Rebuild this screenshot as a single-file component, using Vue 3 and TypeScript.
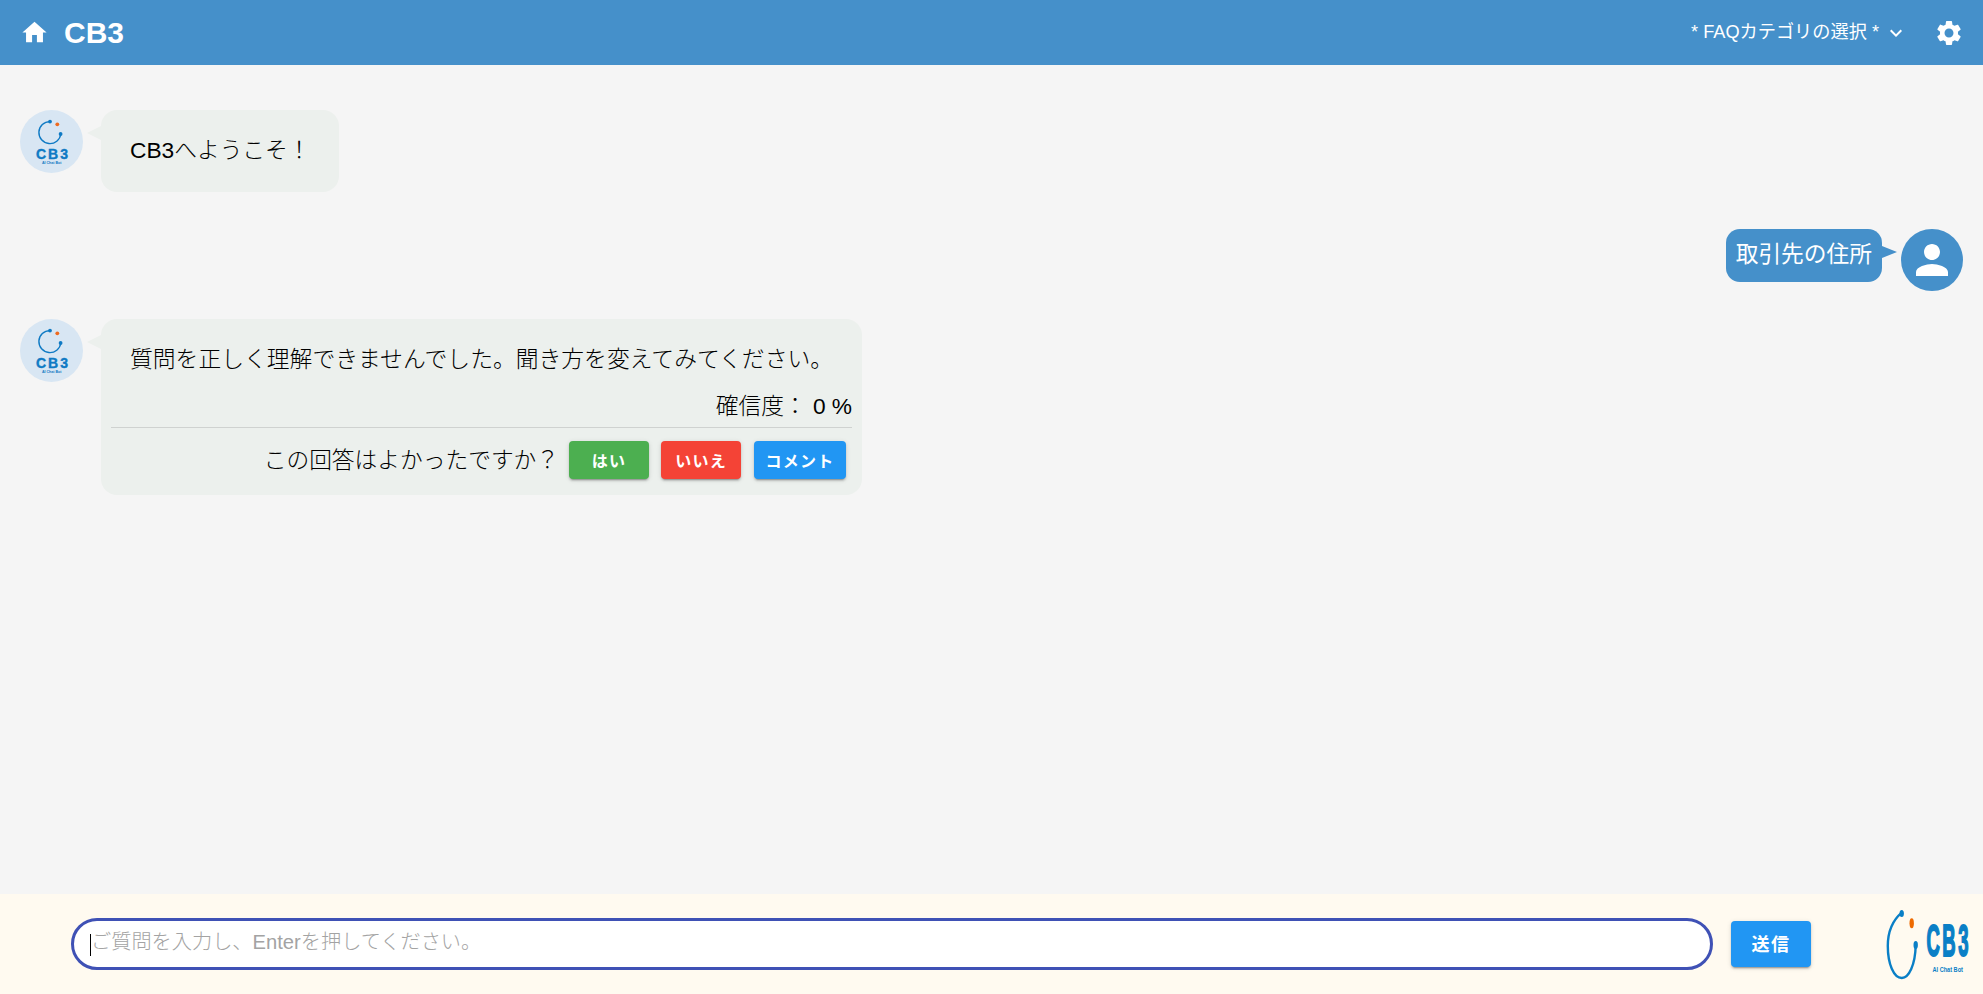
<script setup lang="ts">
const placeholder: string = 'ご質問を入力し、Enterを押してください。'
</script>

<template>
  <div class="page">
    <header class="topbar">
      <svg class="home" viewBox="0 0 24 24"><path d="M10 20v-6h4v6h5v-8h3L12 3 2 12h3v8z" /></svg>
      <h1 class="title">CB3</h1>
      <div class="category">
        <span class="category-label">* FAQカテゴリの選択 *</span>
        <svg class="chevron" viewBox="0 0 24 24"><path d="M16.59 8.59L12 13.17 7.41 8.59 6 10l6 6 6-6z" /></svg>
      </div>
      <svg class="gear" viewBox="0 0 24 24"><path d="M19.14 12.94c.04-.3.06-.61.06-.94 0-.32-.02-.64-.07-.94l2.03-1.58c.18-.14.23-.41.12-.61l-1.92-3.32c-.12-.22-.37-.29-.59-.22l-2.39.96c-.5-.38-1.03-.7-1.62-.94l-.36-2.54c-.04-.24-.24-.41-.48-.41h-3.84c-.24 0-.43.17-.47.41l-.36 2.54c-.59.24-1.13.57-1.62.94l-2.39-.96c-.22-.08-.47 0-.59.22L2.74 8.87c-.12.21-.08.47.12.61l2.03 1.58c-.05.3-.09.63-.09.94s.02.64.07.94l-2.03 1.58c-.18.14-.23.41-.12.61l1.92 3.32c.12.22.37.29.59.22l2.39-.96c.5.38 1.03.7 1.62.94l.36 2.54c.05.24.24.41.48.41h3.84c.24 0 .44-.17.47-.41l.36-2.54c.59-.24 1.13-.56 1.62-.94l2.39.96c.22.08.47 0 .59-.22l1.92-3.32c.12-.22.07-.47-.12-.61l-2.01-1.58zM12 15.6c-1.98 0-3.6-1.62-3.6-3.6s1.62-3.6 3.6-3.6 3.6 1.62 3.6 3.6-1.62 3.6-3.6 3.6z" /></svg>
    </header>

    <main class="chat">
      <div class="row first">
        <svg class="avatar" viewBox="0 0 63 63">
          <circle cx="31.5" cy="31.5" r="31.5" fill="#d8e6f3" />
          <path d="M30 11.6A11 11 0 1 0 40.8 24" fill="none" stroke="#0f7ac4" stroke-width="1.4" />
          <circle cx="30" cy="11.6" r="1.9" fill="#0f7ac4" />
          <circle cx="40.6" cy="24" r="1.9" fill="#0f7ac4" />
          <circle cx="37.3" cy="14.3" r="1.9" fill="#ee6a1f" />
          <text x="16" y="49.3" class="av-name">CB3</text>
          <text x="31.7" y="53.8" text-anchor="middle" class="av-sub">AI Chat Bot</text>
        </svg>
        <div class="bubble bot">
          <p class="msg short">CB3へようこそ！</p>
        </div>
      </div>

      <div class="row mine">
        <div class="bubble user">取引先の住所</div>
        <div class="user-avatar">
          <svg viewBox="0 0 24 24"><path d="M12 12c2.21 0 4-1.79 4-4s-1.79-4-4-4-4 1.79-4 4 1.79 4 4 4zm0 2c-2.67 0-8 1.34-8 4v2h16v-2c0-2.66-5.33-4-8-4z" /></svg>
        </div>
      </div>

      <div class="row">
        <svg class="avatar" viewBox="0 0 63 63">
          <circle cx="31.5" cy="31.5" r="31.5" fill="#d8e6f3" />
          <path d="M30 11.6A11 11 0 1 0 40.8 24" fill="none" stroke="#0f7ac4" stroke-width="1.4" />
          <circle cx="30" cy="11.6" r="1.9" fill="#0f7ac4" />
          <circle cx="40.6" cy="24" r="1.9" fill="#0f7ac4" />
          <circle cx="37.3" cy="14.3" r="1.9" fill="#ee6a1f" />
          <text x="16" y="49.3" class="av-name">CB3</text>
          <text x="31.7" y="53.8" text-anchor="middle" class="av-sub">AI Chat Bot</text>
        </svg>
        <div class="bubble bot">
          <p class="msg long">質問を正しく理解できませんでした。聞き方を変えてみてください。</p>
          <p class="confidence">確信度： 0 %</p>
          <div class="feedback">
            <span class="ask">この回答はよかったですか？</span>
            <button class="btn green">はい</button>
            <button class="btn red">いいえ</button>
            <button class="btn blue wide">コメント</button>
          </div>
        </div>
      </div>
    </main>

    <footer class="composer">
      <div class="field">
        <input class="input" type="text" :placeholder="placeholder" />
        <span class="caret"></span>
      </div>
      <button class="btn blue send"><span class="send-label">送信</span></button>
      <svg class="logo" viewBox="0 0 83 70">
        <path d="M14.7 3.7C5 12 .8 24 .8 37c0 18 6 32 14 32 7 0 13.500-13 13.900-33" fill="none" stroke="#0a7fc6" stroke-width="2.4" />
        <ellipse cx="14.700" cy="4.500" rx="2.200" ry="3.600" fill="#0a7fc6" />
        <ellipse cx="28.700" cy="36" rx="2.200" ry="4" fill="#0a7fc6" />
        <ellipse cx="24.700" cy="14.300" rx="2.200" ry="5" fill="#ee6a00" />
        <text transform="translate(39.500 47) scale(.42 1)" class="logo-name">CB3</text>
        <text transform="translate(45.500 63) scale(.8 1)" class="logo-sub">AI Chat Bot</text>
      </svg>
    </footer>
  </div>
</template>

<style scoped>
.page {
  display: flex;
  flex-direction: column;
  height: 994px;
  background: #f5f5f5;
  color: #000;
  font-family: "Liberation Sans", "Noto Sans CJK JP", sans-serif;
  font-weight: 300;
  overflow: hidden;
}

.topbar {
  flex: none;
  display: flex;
  align-items: center;
  height: 65px;
  padding: 0 19px 0 20px;
  background: #4590ca;
  color: #fff;
}
.topbar svg { fill: #fff; display: block; }
.home { width: 29px; height: 29px; margin-top: -1px; }
.title {
  flex: 1;
  margin: 0 0 0 15px;
  font-size: 30px;
  font-weight: 700;
}
.category {
  display: flex;
  align-items: center;
  font-size: 18.2px;
  font-weight: 400;
}
.category-label { margin-top: -5px; }
.chevron { width: 24px; height: 24px; margin-left: 5px; }
.gear { width: 30px; height: 30px; margin-left: 26px; }

.chat {
  flex: 1;
  min-height: 0;
  padding: 45px 20px 0;
}
.row {
  display: flex;
  align-items: flex-start;
  margin-bottom: 28px;
}
.row.first { margin-bottom: 37px; }
.row.mine { justify-content: flex-end; }

.avatar { flex: none; width: 63px; height: 63px; display: block; }
.av-name {
  font: 700 14px "Liberation Sans", sans-serif;
  letter-spacing: 2px;
  fill: #0f7ac4;
  stroke: #0f7ac4;
  stroke-width: .4px;
}
.av-sub { font: 700 3.600px "Liberation Sans", sans-serif; fill: #0f7ac4; }

.bubble {
  position: relative;
  font-size: 22.72px;
}
.bubble.bot {
  margin-left: 18px;
  padding: 10px;
  background: #ecf0ed;
  border-radius: 16px;
}
.bubble.bot::before {
  content: "";
  position: absolute;
  left: -14px;
  top: 16px;
  border-style: solid;
  border-width: 7px 14px 7px 0;
  border-color: transparent #ecf0ed transparent transparent;
}
.bubble.user {
  padding: 0 10px 2px;
  line-height: 51px;
  color: #fff;
  font-weight: 400;
  background: #4590ca;
  border-radius: 14px;
}
.bubble.user::after {
  content: "";
  position: absolute;
  right: -15px;
  top: 17px;
  border-style: solid;
  border-width: 6px 0 6px 15px;
  border-color: transparent transparent transparent #4590ca;
}
.user-avatar {
  flex: none;
  display: flex;
  align-items: center;
  justify-content: center;
  width: 62px;
  height: 62px;
  margin-left: 19px;
  border-radius: 50%;
  background: #4590ca;
}
.user-avatar svg { width: 48px; height: 48px; fill: #fff; display: block; }

.msg {
  margin: 0;
  padding: 0 19px 2px;
  line-height: 60px;
}
.msg.short { padding-right: 18px; }
.msg.long { font-size: 22.8px; }
.confidence {
  margin: 0;
  padding-bottom: 6px;
  line-height: 30px;
  text-align: right;
}
.feedback {
  display: flex;
  align-items: center;
  justify-content: flex-end;
  padding: 13px 0 6px;
  border-top: 1px solid #cfd2d0;
}
.ask { margin-right: 4px; padding-bottom: 4px; }

.btn {
  width: 80px;
  height: 38px;
  margin: 0 6px;
  padding: 0;
  border: 0;
  border-radius: 4px;
  color: #fff;
  font-family: Roboto, "Noto Sans CJK JP", sans-serif;
  font-size: 16px;
  font-weight: 700;
  letter-spacing: 0.08em;
  box-shadow: 0 3px 1px -2px rgba(0,0,0,.2), 0 2px 2px 0 rgba(0,0,0,.14), 0 1px 5px 0 rgba(0,0,0,.12);
}
.btn.wide { width: 92px; margin-left: 7px; }
.green { background: #4caf50; }
.red { background: #f44336; }
.blue { background: #2196f3; }

.composer {
  flex: none;
  display: flex;
  align-items: center;
  height: 100px;
  padding: 0 13px 0 71px;
  background: #fffaf0;
}
.field {
  position: relative;
  flex: none;
  width: 1642px;
  height: 52px;
}
.input {
  box-sizing: border-box;
  display: block;
  width: 100%;
  height: 100%;
  padding: 0 17px 3px;
  border: 3px solid #3f51b5;
  border-radius: 26px;
  outline: none;
  background: #fff;
  font-family: "Liberation Sans", "Noto Sans CJK JP", sans-serif;
  font-size: 20.2px;
  font-weight: 300;
  color: #000;
}
.input::placeholder { color: #a3a3a3; opacity: 1; }
.caret {
  position: absolute;
  left: 19px;
  top: 16px;
  width: 1px;
  height: 22px;
  background: #000;
}
.send {
  flex: none;
  width: 80px;
  height: 46px;
  margin: 0 0 0 18px;
  font-size: 18px;
}
.send-label { display: block; margin-top: -3px; }
.logo {
  flex: none;
  display: block;
  width: 83px;
  height: 70px;
  margin-left: 76px;
  overflow: visible;
}
.logo-name {
  font: 700 44px "Liberation Sans", sans-serif;
  letter-spacing: 6px;
  fill: #0a7fc6;
  stroke: #0a7fc6;
  stroke-width: 2px;
}
.logo-sub { font: 700 7px "Liberation Sans", sans-serif; fill: #0a7fc6; }
</style>

<style>
html, body { margin: 0; background: #f5f5f5; }
</style>
